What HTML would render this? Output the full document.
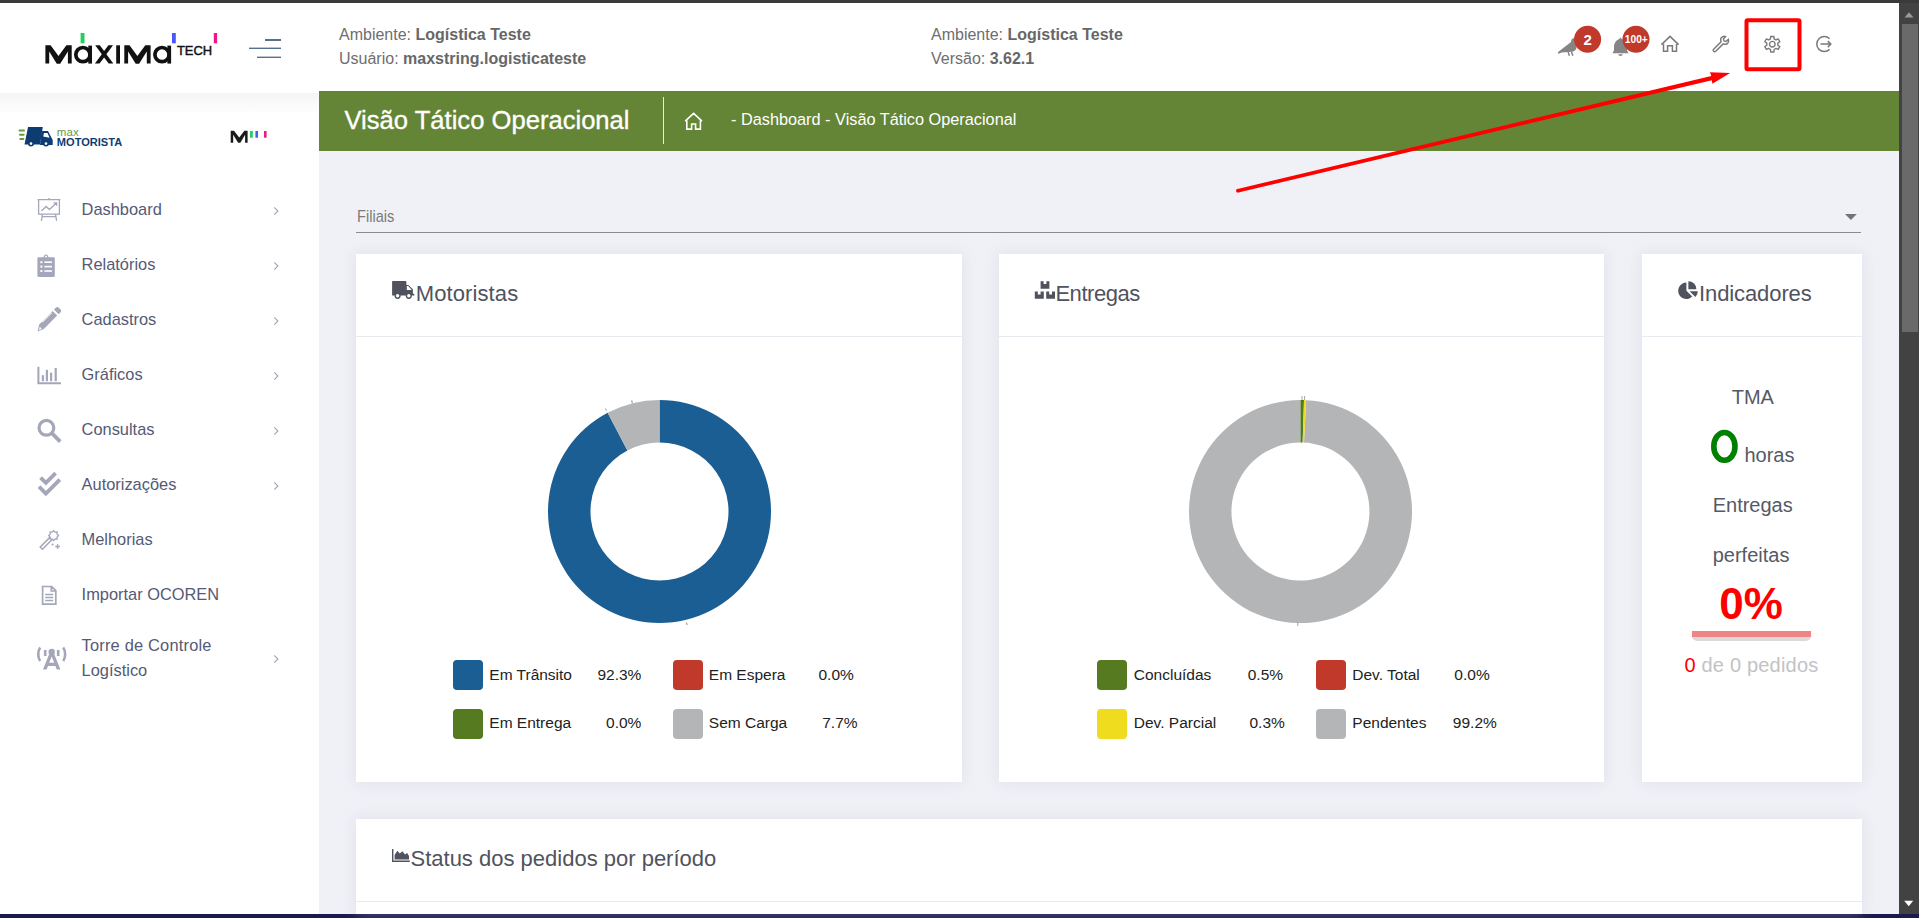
<!DOCTYPE html>
<html><head><meta charset="utf-8">
<style>
*{box-sizing:border-box;margin:0;padding:0}
html,body{width:1919px;height:918px;overflow:hidden;background:#f0f1f6;font-family:"Liberation Sans",sans-serif;position:relative}
.abs{position:absolute}
svg{position:absolute;overflow:visible}
#topbar{left:0;top:0;width:1919px;height:3px;background:#3a3a3a}
#header{left:0;top:3px;width:1899px;height:88px;background:#fff}
#sidebar{left:0;top:91px;width:319px;height:823px;background:#fff}
#sideshadow{left:0;top:93px;width:319px;height:20px;background:linear-gradient(#f5f5f5,#fefefe)}
#green{left:319px;top:91px;width:1580px;height:60px;background:#658536}
#scroll{left:1899px;top:3px;width:20px;height:911px;background:#424242}
#thumb{left:1901.5px;top:24.3px;width:16px;height:308px;background:#6a6a6a}
#bottombar{left:0;top:914px;width:1919px;height:4px;background:#1c1a4c}
.t{position:absolute;white-space:nowrap;line-height:1}
.htxt{font-size:16px;color:#6e6e6e}
.htxt b{color:#676767}
.menu{left:81.6px;font-size:16.4px;color:#555a75}
.card{position:absolute;background:#fff;box-shadow:0 0 14px rgba(190,190,215,.35)}
.ctitle{font-size:22px;color:#50535e}
.hline{position:absolute;height:1px;background:#e9e9f0}
.leg{font-size:15.5px;color:#222}
.sw{position:absolute;width:30px;height:30px;border-radius:4px}
.ind{font-size:20px;color:#555a66}
</style></head><body>
<div id="topbar" class="abs"></div>
<div id="header" class="abs"></div>
<div id="sidebar" class="abs"></div>
<div id="sideshadow" class="abs"></div>
<div id="green" class="abs"></div>
<div id="scroll" class="abs"></div>
<div id="thumb" class="abs"></div>
<div id="bottombar" class="abs"></div>
<svg style="left:1899px;top:0" width="20" height="918"><path d="M5.5 17.6H14.5L10 12.2Z" fill="#9a9a9a"/><path d="M5.2 900.8H14.2L9.7 906.2Z" fill="#fff"/></svg>

<!-- Maxima logo -->
<svg style="left:0;top:0" width="260" height="90">
 <g fill="#111">
  <path d="M45.4 63.6V45.3H50.6L58.5 56L66.4 45.3H71.7V63.6H67.9V51.6L60.2 63.8H56.8L49.2 51.6V63.6Z"/>
  <path d="M124.3 63.6V45.3H129.5L137.4 56L145.3 45.3H150.6V63.6H146.8V51.6L139.1 63.8H135.7L128.1 51.6V63.6Z"/>
  <path d="M116.2 45.3H120V63.6H116.2Z"/>
  <path d="M95.2 45.3H99.8L104.1 51L108.4 45.3H113L106.4 54.3L113.3 63.6H108.7L104.1 57.5L99.5 63.6H94.9L101.8 54.3Z"/>
 </g>
 <g fill="none" stroke="#111" stroke-width="3.7">
  <circle cx="82.9" cy="54.6" r="7.1"/><circle cx="162" cy="54.6" r="7.1"/>
 </g>
 <g fill="#111"><rect x="88.3" y="45.6" width="3.7" height="18"/><rect x="167.4" y="45.6" width="3.7" height="18"/></g>
 <text x="176.9" y="54.85" font-family="Liberation Sans" font-size="13.5" fill="#111" stroke="#111" stroke-width="0.45" textLength="35.2" lengthAdjust="spacingAndGlyphs">TECH</text>
 <rect x="80.6" y="33" width="3.9" height="10.3" fill="#1fd15a"/>
 <rect x="172" y="33" width="3.8" height="10.3" fill="#4a57ff"/>
 <rect x="213.8" y="33" width="3.3" height="10.3" fill="#f0168a"/>
 <!-- hamburger -->
 <rect x="265" y="39" width="16" height="2" fill="#56708f"/>
 <rect x="249" y="47.6" width="32" height="1.4" fill="#56708f"/>
 <rect x="257" y="56.6" width="24" height="1.4" fill="#56708f"/>
</svg>

<!-- header texts -->
<div class="t htxt" style="left:339px;top:26.8px">Ambiente: <b>Logística Teste</b></div>
<div class="t htxt" style="left:339px;top:51.2px">Usuário: <b>maxstring.logisticateste</b></div>
<div class="t htxt" style="left:931px;top:26.8px">Ambiente: <b>Logística Teste</b></div>
<div class="t htxt" style="left:931px;top:51.2px">Versão: <b>3.62.1</b></div>

<!-- header icons -->
<svg style="left:1540px;top:15px" width="320" height="70">
 <g fill="#858585">
  <!-- bird -->
  <path d="M17.8 37.3L31 27C31 24.5 32.5 23 34.5 23L36.5 24L36.5 33C35.8 35 34.5 36.5 32 36.8L21.5 37.6C20 38.4 18.8 38.8 18.2 38.6Z"/><path d="M28 36.5L29.4 40.7M31.4 36.5L32.8 40.7" stroke="#858585" stroke-width="1.5"/>
  <!-- bell -->
  <path d="M80.5 22.8C81.2 22.8 81.5 23.4 81.5 24C85 25 87 28.5 87 32V35.5L88.6 38.2H72.4L74 35.5V32C74 28.5 76 25 79.5 24C79.5 23.4 79.8 22.8 80.5 22.8Z"/>
  <path d="M78.2 39.2H82.8C82.6 40.3 81.8 40.9 80.5 40.9S78.4 40.3 78.2 39.2Z"/>
 </g>
 <circle cx="47.6" cy="24.3" r="13.5" fill="#c0392b"/>
 <circle cx="96" cy="24.3" r="13.5" fill="#c0392b"/>
 <text x="47.6" y="30" text-anchor="middle" font-family="Liberation Sans" font-weight="700" font-size="15" fill="#fff">2</text>
 <text x="96.3" y="28.3" text-anchor="middle" font-family="Liberation Sans" font-weight="700" font-size="11" fill="#fff" textLength="23" lengthAdjust="spacingAndGlyphs">100+</text>
 <g fill="none" stroke="#7a7a7a" stroke-width="1.5">
  <!-- home -->
  <path d="M121.4 29.6L130 21.4L138.6 29.6M123.5 27.8V36.2H127.6V30.8H132.4V36.2H136.5V27.8"/>
  <!-- wrench -->
  <path transform="translate(34.44 5.44) scale(0.8)" stroke-width="1.8" d="M174 36L183.3 26.7C182.3 24.3 183 21.7 185 20.5C186.3 19.8 187.8 19.7 189 20.2L186.3 23L187 25.6L189.6 26.3L192.4 23.6C192.9 24.8 192.8 26.3 192.1 27.6C190.9 29.6 188.3 30.3 185.9 29.3L176.6 38.6C175.8 39.4 174.8 39.4 174 38.6C173.2 37.8 173.2 36.8 174 36Z"/>
  <!-- logout -->
  <path d="M289.6 23.8A7.5 7.5 0 1 0 289.6 34.4"/>
  <path d="M280.5 29.1H290.8M287.8 26.1L290.8 29.1L287.8 32.1"/>
 </g>
 <!-- gear -->
 <g transform="translate(232.3 29.2)" fill="none" stroke="#7a7a7a" stroke-width="1.4" stroke-linejoin="round">
  <path d="M-1.82 -5.29L-1.64 -7.73L1.64 -7.73L1.82 -5.29L3.67 -4.23L5.87 -5.29L7.51 -2.44L5.50 -1.07L5.50 1.07L7.51 2.44L5.87 5.29L3.67 4.23L1.82 5.29L1.64 7.73L-1.64 7.73L-1.82 5.29L-3.67 4.23L-5.87 5.29L-7.51 2.44L-5.50 1.07L-5.50 -1.07L-7.51 -2.44L-5.87 -5.29L-3.67 -4.23Z"/>
  <circle r="2.8"/>
 </g>
 <!-- red box -->
 <rect x="206.5" y="5.3" width="53" height="49" rx="1.2" fill="none" stroke="#ff0000" stroke-width="4"/>
</svg>

<!-- green bar text -->
<div class="t" style="left:344.5px;top:108.4px;font-size:25.6px;color:#fff;-webkit-text-stroke:0.35px #fff">Visão Tático Operacional</div>
<div class="abs" style="left:663px;top:97px;width:1.2px;height:47px;background:#e6ebe0"></div>
<svg style="left:680px;top:109px" width="30" height="26">
 <path d="M5.2 12.2L13.6 4.4L22 12.2M6.8 10.8V20.1H11.6V15H15.6V20.1H20.4V10.8" fill="none" stroke="#fff" stroke-width="1.6"/>
</svg>
<div class="t" style="left:731px;top:111.2px;font-size:16.3px;color:#fff">- Dashboard - Visão Tático Operacional</div>

<!-- red arrow -->
<svg style="left:0;top:0" width="1919" height="918">
 <path d="M1237.6 188.9L1711.3 76.1L1710 72.3L1730.1 73.1L1712.4 83.7L1711.8 80.3L1238.4 192.5Z" fill="#ff0000"/>
 <circle cx="1237.9" cy="190.7" r="1.85" fill="#ff0000"/>
</svg>

<!-- sidebar logos -->
<svg style="left:0;top:110px" width="318" height="50">
 <g fill="#6a9a3a">
  <rect x="18.5" y="19.6" width="6.5" height="2" rx="1"/>
  <rect x="19" y="23.8" width="5.6" height="2" rx="1"/>
  <rect x="19.3" y="28" width="5" height="2" rx="1"/>
 </g>
 <g fill="#0d3c73">
  <path d="M28 17H42.8L40 34.6H24.5Z"/>
  <path d="M41.6 21H48L52.7 30V35H40Z"/>
  <circle cx="31" cy="33.6" r="3"/><circle cx="46" cy="33.6" r="3"/>
 </g>
 <path d="M44 23H47.5L49.6 27.8L43.2 26.4Z" fill="#fff"/>
 <circle cx="31" cy="33.6" r="1.3" fill="#fff"/><circle cx="46" cy="33.6" r="1.3" fill="#fff"/>
 <text x="56.8" y="25.8" font-family="Liberation Sans" font-size="11.5" fill="#6a9a3a" textLength="22">max</text>
 <text x="56.8" y="35.8" font-family="Liberation Sans" font-weight="700" font-size="11.2" fill="#0d3c73" textLength="65.4" lengthAdjust="spacingAndGlyphs">MOTORISTA</text>
 <path d="M230.7 32.7V20.8H234L239.2 27.6L244.4 20.8H247.6V32.7H245.1V24.8L240.3 32.8H238.1L233.2 24.8V32.7Z" fill="#1a1a1a"/>
 <rect x="250" y="21" width="2.8" height="6.7" fill="#1fd15a"/>
 <rect x="255.4" y="21" width="2.6" height="6.7" fill="#4a57ff"/>
 <rect x="264" y="21" width="2.6" height="6.7" fill="#f0168a"/>
</svg>

<!-- sidebar icons -->
<svg style="left:0;top:0" width="318" height="700">
 <g fill="none" stroke="#a4a6ba" stroke-width="1.3">
  <!-- dashboard presentation -->
  <path d="M37.6 199.6H60.4M38.6 199.6V214.2H59.4V199.6M49 198V199.6M42.5 214.2L41.4 220.8M55.5 214.2L56.6 220.8M42 216.7H56M41.4 211L46.2 206.5L49.4 209.5L56.4 203M53.6 202.8H56.6V205.8"/>
  <!-- doc -->
  <path d="M42.6 586.5H51.7L55.8 590.6V604.2H42.6Z M51.3 586.5V591H55.8 M45.2 594.5H53.2M45.2 597.5H53.2M45.2 600.5H53.2" stroke-width="1.7"/>
  <!-- chevrons -->
  <path d="M274.3 207.4L277.9 211L274.3 214.6M274.3 262.4L277.9 266L274.3 269.6M274.3 317.4L277.9 321L274.3 324.6M274.3 372.4L277.9 376L274.3 379.6M274.3 427.4L277.9 431L274.3 434.6M274.3 482.4L277.9 486L274.3 489.6M274.3 655.4L277.9 659L274.3 662.6" stroke="#a0a2b8" stroke-width="1.1"/>
 </g>
 <g fill="#a4a6ba">
  <!-- clipboard -->
  <path d="M38.6 257.3H43.6C43.6 255.4 44.6 254.4 46 254.4C47.4 254.4 48.4 255.4 48.4 257.3H53.6C54.3 257.3 54.8 257.8 54.8 258.5V275.7C54.8 276.4 54.3 276.9 53.6 276.9H38.6C37.9 276.9 37.4 276.4 37.4 275.7V258.5C37.4 257.8 37.9 257.3 38.6 257.3Z"/>
  <!-- pencil -->
  <path d="M37.6 331.6L39.2 324.4L52.6 311L57.2 315.6L43.8 329Z M54 309.6L56 307.6C56.8 306.8 57.8 306.8 58.6 307.6L60.6 309.6C61.4 310.4 61.4 311.4 60.6 312.2L58.6 314.2Z"/>
  <!-- bar chart -->
  <path d="M37.4 366.8H39.4V382.2H61V384.2H37.4Z"/>
  <rect x="41.8" y="375.2" width="2.2" height="6"/><rect x="45.8" y="369.8" width="2.2" height="11.4"/><rect x="50" y="372.6" width="2.2" height="8.6"/><rect x="54.6" y="368" width="2.2" height="13.2"/>
  <!-- checks -->
  
  
  <!-- tower -->
  <path d="M49.4 653.5H54L60.4 669.6H56.8L55.4 666H48L46.6 669.6H43Z M49.2 662.8H54.2L51.7 656.4Z" fill-rule="evenodd"/>
  <circle cx="51.7" cy="652" r="3.2"/>
 </g>
 <g fill="none" stroke="#a4a6ba" stroke-width="2.2">
  <circle cx="46.4" cy="427.8" r="7.4" stroke-width="3.2"/>
  <path d="M51.8 433.2L60.2 441.6" stroke-width="3.8"/>
  <path d="M40.2 647.5C37.6 651 37.6 657.5 40.2 661M63.2 647.5C65.8 651 65.8 657.5 63.2 661M45.2 650V656M58.2 650V656" stroke-width="2.6"/>
 </g>
 <g fill="#fff">
  <rect x="40.4" y="261.2" width="2" height="2"/><rect x="44.4" y="261.4" width="7.6" height="1.6"/>
  <rect x="40.4" y="265.6" width="2" height="2"/><rect x="44.4" y="265.8" width="7.6" height="1.6"/>
  <rect x="40.4" y="270" width="2" height="2"/><rect x="44.4" y="270.2" width="7.6" height="1.6"/>
  <circle cx="46" cy="256.6" r="1"/>
  <path d="M53.2 309.8L56.2 312.8L55.6 313.4L52.6 310.4Z"/>
  <path d="M42 321.8L51.5 312.4L52 313L42.6 322.4Z"/>
  <path d="M38.9 330.3L39.8 326.8L41.7 328.7Z"/>
 </g>
 <path d="M40.6 477.6L45.9 482.9L55.6 473.2M39 486.6L45.9 493.5L59.8 479.6" fill="none" stroke="#a4a6ba" stroke-width="3.8"/>
 <!-- wand -->
 <g fill="none" stroke="#a4a6ba" stroke-width="1.5">
  <path d="M40.2 547L51.6 535.6L53.8 537.8L42.4 549.2Z"/>
  <path d="M58.60 535.60L57.02 537.02L57.14 539.14L55.02 539.02L53.60 540.60L52.18 539.02L50.06 539.14L50.18 537.02L48.60 535.60L50.18 534.18L50.06 532.06L52.18 532.18L53.60 530.60L55.02 532.18L57.14 532.06L57.02 534.18Z" stroke-width="1.3" fill="#fff"/>
  <path d="M57.6 544.2V548.8M55.3 546.5H59.9"/>
 </g>
 <circle cx="52.6" cy="544.4" r="1" fill="#a4a6ba"/>
</svg>

<!-- sidebar menu -->
<div class="t menu" style="top:200.9px">Dashboard</div>
<div class="t menu" style="top:255.9px">Relatórios</div>
<div class="t menu" style="top:310.9px">Cadastros</div>
<div class="t menu" style="top:365.9px">Gráficos</div>
<div class="t menu" style="top:420.9px">Consultas</div>
<div class="t menu" style="top:475.9px">Autorizações</div>
<div class="t menu" style="top:530.9px">Melhorias</div>
<div class="t menu" style="top:585.9px">Importar OCOREN</div>
<div class="t menu" style="top:637.1px;letter-spacing:0.2px">Torre de Controle</div>
<div class="t menu" style="top:661.8px">Logístico</div>

<!-- filiais -->
<div class="t" style="left:356.6px;top:207.9px;font-size:16.4px;color:#7a7a7a;transform:scaleX(0.89);transform-origin:0 0">Filiais</div>
<div class="abs" style="left:356px;top:232px;width:1505px;height:1px;background:#8a8a90"></div>
<svg style="left:1845px;top:214px" width="12" height="6"><path d="M0 0H11.8L5.9 5.9Z" fill="#737373"/></svg>

<!-- cards -->
<div class="card" style="left:356px;top:254px;width:606px;height:528px"></div>
<div class="card" style="left:999px;top:254px;width:605px;height:528px"></div>
<div class="card" style="left:1642px;top:254px;width:220px;height:528px"></div>
<div class="card" style="left:356px;top:819px;width:1506px;height:95px"></div>
<div class="hline" style="left:356px;top:336px;width:606px"></div>
<div class="hline" style="left:999px;top:336px;width:605px"></div>
<div class="hline" style="left:1642px;top:336px;width:220px"></div>
<div class="hline" style="left:356px;top:901px;width:1506px"></div>

<!-- card titles -->
<svg style="left:0;top:0" width="1919" height="918">
 <g fill="#50535e">
  <!-- truck -->
  <path d="M393.1 281.1H405.3C405.9 281.1 406.4 281.6 406.4 282.2V285H408.4L412.9 289.3V293.8H414.3V295.5H392.1V282.1C392.1 281.5 392.5 281.1 393.1 281.1Z"/>
  <circle cx="397.6" cy="295.8" r="3.1"/><circle cx="408.8" cy="295.8" r="3.1"/>
  <!-- boxes -->
  <path d="M1040.6 281.2H1043.6V284H1046.4V281.2H1049.4V288.8H1040.6Z"/>
  <path d="M1034.8 291.6H1037.8V294.4H1040.6V291.6H1043.8V298.8H1034.8Z"/>
  <path d="M1046.2 291.6H1049.2V294.4H1052V291.6H1055V298.8H1046.2Z"/>
  <!-- pie -->
  <path d="M1686.4 282.6V290.8L1692.2 296.6A8.2 8.2 0 1 1 1686.4 282.6Z"/>
  <path d="M1688.4 281.2A8 8 0 0 1 1696.4 289.2H1688.4Z"/>
  <path d="M1689.6 291.2H1697.8A8.2 8.2 0 0 1 1695.4 297Z"/>
  <!-- area chart -->
  <path d="M392 848.9H393.4V860.6H409.8V862.1H392Z"/>
  <path d="M394.6 859.4V855L397.4 850.8L399.8 853.6L402.4 851.2L405 854.6L407.2 853L409 856V859.4Z"/>
 </g>
 <g fill="#fff"><circle cx="397.6" cy="295.8" r="1.7"/><circle cx="408.8" cy="295.8" r="1.7"/><path d="M406.8 285.9H408.2L411.8 290H406.8Z"/></g>
</svg>
<div class="t ctitle" style="left:415.8px;top:283.4px;letter-spacing:0.1px">Motoristas</div>
<div class="t ctitle" style="left:1055.4px;top:283.4px;letter-spacing:-0.45px">Entregas</div>
<div class="t ctitle" style="left:1699px;top:283.4px;letter-spacing:-0.1px">Indicadores</div>
<div class="t ctitle" style="left:410.5px;top:848.1px">Status dos pedidos por período</div>

<!-- donut 1 -->
<svg style="left:547.5px;top:400px" width="223" height="223">
 <path d="M111.50 0.00A111.5 111.5 0 1 1 59.64 12.80L79.40 50.42A69 69 0 1 0 111.50 42.50Z" fill="#1b5e94"/>
 <path d="M59.64 12.80A111.5 111.5 0 0 1 111.50 0.00L111.50 42.50A69 69 0 0 0 79.40 50.42Z" fill="#b4b5b7"/>
 <path d="M58.4 10.4L57.6 8.6M84.2 3.2L83.8 0.4M138.6 222.5L139 225" stroke="#8a8a8a" stroke-width="1"/>
</svg>
<!-- donut 2 -->
<svg style="left:1189.3px;top:400px" width="223" height="223">
 <path d="M117.10 0.14A111.5 111.5 0 1 1 111.50 0.00L111.50 42.50A69 69 0 1 0 114.97 42.59Z" fill="#b4b5b7"/>
 <path d="M111.50 0.00A111.5 111.5 0 0 1 115.00 0.06L113.67 42.53A69 69 0 0 0 111.50 42.50Z" fill="#4f7a1e"/>
 <path d="M115.00 0.06A111.5 111.5 0 0 1 117.10 0.14L114.97 42.59A69 69 0 0 0 113.67 42.53Z" fill="#efdc1f"/>
 <path d="M113 0V-4M115.6 0V-4M108.8 222.5V226" stroke="#999" stroke-width="0.9"/>
</svg>

<!-- legend 1 -->
<div class="sw" style="left:452.7px;top:659.8px;background:#1b5e94"></div>
<div class="sw" style="left:452.7px;top:708.8px;background:#557a1f"></div>
<div class="sw" style="left:672.7px;top:659.8px;background:#c0392b"></div>
<div class="sw" style="left:672.7px;top:708.8px;background:#b4b5b7"></div>
<div class="t leg" style="left:489.3px;top:666.7px">Em Trânsito</div>
<div class="t leg" style="left:489.3px;top:715.1px">Em Entrega</div>
<div class="t leg" style="left:708.8px;top:666.7px">Em Espera</div>
<div class="t leg" style="left:708.8px;top:715.1px">Sem Carga</div>
<div class="t leg" style="left:641.4px;top:666.7px;transform:translateX(-100%)">92.3%</div>
<div class="t leg" style="left:641.4px;top:715.1px;transform:translateX(-100%)">0.0%</div>
<div class="t leg" style="left:853.8px;top:666.7px;transform:translateX(-100%)">0.0%</div>
<div class="t leg" style="left:857.6px;top:715.1px;transform:translateX(-100%)">7.7%</div>

<!-- legend 2 -->
<div class="sw" style="left:1097.1px;top:659.8px;background:#557a1f"></div>
<div class="sw" style="left:1097.1px;top:708.8px;background:#efdc1f"></div>
<div class="sw" style="left:1316.2px;top:659.8px;background:#c0392b"></div>
<div class="sw" style="left:1316.2px;top:708.8px;background:#b4b5b7"></div>
<div class="t leg" style="left:1133.8px;top:666.7px">Concluídas</div>
<div class="t leg" style="left:1133.8px;top:715.1px">Dev. Parcial</div>
<div class="t leg" style="left:1352.3px;top:666.7px">Dev. Total</div>
<div class="t leg" style="left:1352.3px;top:715.1px">Pendentes</div>
<div class="t leg" style="left:1283.1px;top:666.7px;transform:translateX(-100%)">0.5%</div>
<div class="t leg" style="left:1284.8px;top:715.1px;transform:translateX(-100%)">0.3%</div>
<div class="t leg" style="left:1489.7px;top:666.7px;transform:translateX(-100%)">0.0%</div>
<div class="t leg" style="left:1496.8px;top:715.1px;transform:translateX(-100%)">99.2%</div>

<!-- indicadores -->
<div class="t ind" style="left:1731.7px;top:387px">TMA</div>
<svg style="left:1700px;top:420px" width="50" height="50"><ellipse cx="24.4" cy="26.4" rx="10.6" ry="13.9" fill="none" stroke="#008000" stroke-width="5.6"/></svg>
<div class="t ind" style="left:1744.4px;top:445px">horas</div>
<div class="t ind" style="left:1712.7px;top:495.4px">Entregas</div>
<div class="t ind" style="left:1712.7px;top:544.9px">perfeitas</div>
<div class="t" style="left:1719.2px;top:582.3px;font-size:44px;font-weight:700;color:#ff0000">0%</div>
<div class="abs" style="left:1692px;top:631px;width:119px;height:10px;border-radius:0 0 5px 5px;background:#dadad9"></div>
<div class="abs" style="left:1692px;top:631px;width:119px;height:5.5px;background:#f08484"></div>
<div class="t ind" style="left:1684.4px;top:654.9px;color:#c2c2c6;letter-spacing:0.2px"><span style="color:#ff0000">0</span> de 0 pedidos</div>

</body></html>
